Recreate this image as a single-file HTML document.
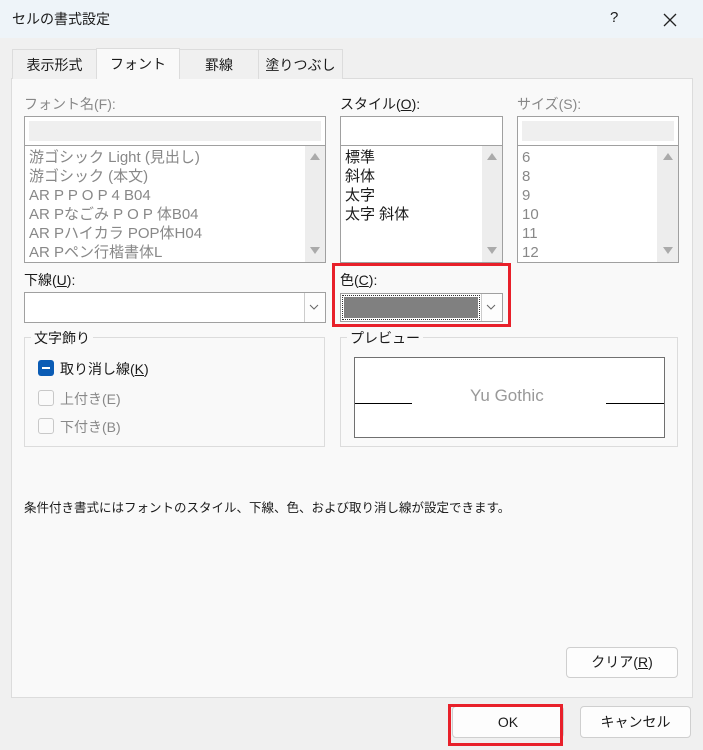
<!DOCTYPE html>
<html><head><meta charset="utf-8"><style>
*{box-sizing:border-box;margin:0;padding:0}
body{width:703px;height:750px;overflow:hidden;background:#f0f0f0;font-family:"Liberation Sans","Noto Sans CJK JP",sans-serif;font-size:14px;color:#1a1a1a;position:relative}
.a{position:absolute}
.title{left:0;top:0;width:703px;height:38px;background:#eef4f9}
.tab{top:49px;height:30px;border:1px solid #dcdcdc;border-bottom:none;background:#f0f0f0;text-align:center;line-height:30px;font-size:14px}
.panel{left:11px;top:78px;width:682px;height:620px;background:#f9f9f9;border:1px solid #dcdcdc}
.box{background:#fff;border:1px solid #a0a0a0}
.lbl{font-size:14px}
.g{color:#888}
.list div{height:19px;line-height:19px;padding-left:4px;font-size:15px}
.sb{background:#ededed}
.tri{width:0;height:0;border-left:5px solid transparent;border-right:5px solid transparent}
.btn{background:#fdfdfd;border:1px solid #cfcfcf;border-radius:4px;text-align:center;font-size:14px}
.grp{border:1px solid #dcdcdc}
</style></head><body>
<div class="a title"></div>
<div class="a" style="left:12px;top:9px;font-size:14px">セルの書式設定</div>
<div class="a" style="left:610px;top:9px;font-size:15px">?</div>
<svg class="a" style="left:662px;top:12px" width="16" height="16"><path d="M2 2L14 14M14 2L2 14" stroke="#222" stroke-width="1.3"/></svg>

<div class="a panel"></div>
<div class="a tab" style="left:12px;width:85px">表示形式</div>
<div class="a tab" style="left:96px;width:84px;background:#f9f9f9;height:31px;top:48px">フォント</div>
<div class="a tab" style="left:179px;width:80px">罫線</div>
<div class="a tab" style="left:258px;width:85px">塗りつぶし</div>

<div class="a lbl g" style="left:24px;top:94px">フォント名(F):</div>
<div class="a box" style="left:24px;top:116px;width:302px;height:30px"><div style="margin:4px;height:20px;background:#efefef"></div></div>
<div class="a box list g" style="left:24px;top:145px;width:302px;height:118px;padding-top:2px">
<div>游ゴシック Light (見出し)</div><div>游ゴシック (本文)</div><div>AR P P O P 4 B04</div><div>AR Pなごみ P O P 体B04</div><div>AR Pハイカラ POP体H04</div><div>AR Pペン行楷書体L</div></div>
<div class="a sb" style="left:305px;top:146px;width:20px;height:116px"></div>
<div class="a tri" style="left:310px;top:153px;border-bottom:7px solid #aaa"></div>
<div class="a tri" style="left:310px;top:247px;border-top:7px solid #aaa"></div>

<div class="a lbl" style="left:340px;top:94px">スタイル(<u>O</u>):</div>
<div class="a box" style="left:340px;top:116px;width:163px;height:30px"></div>
<div class="a box list" style="left:340px;top:145px;width:163px;height:118px;padding-top:2px"><div>標準</div><div>斜体</div><div>太字</div><div>太字 斜体</div></div>
<div class="a sb" style="left:482px;top:146px;width:20px;height:116px"></div>
<div class="a tri" style="left:487px;top:153px;border-bottom:7px solid #aaa"></div>
<div class="a tri" style="left:487px;top:247px;border-top:7px solid #aaa"></div>

<div class="a lbl g" style="left:517px;top:94px">サイズ(S):</div>
<div class="a box" style="left:517px;top:116px;width:162px;height:30px"><div style="margin:4px;height:20px;background:#efefef"></div></div>
<div class="a box list g" style="left:517px;top:145px;width:162px;height:118px;padding-top:2px"><div>6</div><div>8</div><div>9</div><div>10</div><div>11</div><div>12</div></div>
<div class="a sb" style="left:657px;top:146px;width:21px;height:116px"></div>
<div class="a tri" style="left:663px;top:153px;border-bottom:7px solid #aaa"></div>
<div class="a tri" style="left:663px;top:247px;border-top:7px solid #aaa"></div>

<div class="a lbl" style="left:24px;top:270px">下線(<u>U</u>):</div>
<div class="a box" style="left:24px;top:292px;width:302px;height:31px"></div>
<div class="a" style="left:304px;top:293px;width:21px;height:29px;border-left:1px solid #ccc;background:#fdfdfd"></div>
<svg class="a" style="left:309px;top:303px" width="10" height="8"><path d="M1 2L5 6L9 2" stroke="#666" fill="none"/></svg>

<div class="a" style="left:332px;top:263px;width:179px;height:64px;border:3px solid #e8202a"></div>
<div class="a lbl" style="left:340px;top:270px">色(<u>C</u>):</div>
<div class="a box" style="left:340px;top:293px;width:163px;height:29px"></div>
<div class="a" style="left:342px;top:295px;width:138px;height:25px;border:1px dotted #333;background:#fff"><div style="margin:1px;height:21px;background:#808080"></div></div>
<div class="a" style="left:481px;top:294px;width:21px;height:27px;border-left:1px solid #ccc;background:#fdfdfd"></div>
<svg class="a" style="left:486px;top:303px" width="10" height="8"><path d="M1 2L5 6L9 2" stroke="#666" fill="none"/></svg>

<div class="a grp" style="left:24px;top:337px;width:301px;height:110px"></div>
<div class="a" style="left:31px;top:328px;padding:0 3px;background:#f9f9f9">文字飾り</div>
<div class="a" style="left:38px;top:360px;width:16px;height:16px;background:#0b5cb5;border-radius:3px"><div style="margin:7px 4px;height:2px;background:#fff"></div></div>
<div class="a" style="left:60px;top:359px">取り消し線(<u>K</u>)</div>
<div class="a" style="left:38px;top:390px;width:16px;height:16px;border:1px solid #c8c8c8;border-radius:3px;background:#fafafa"></div>
<div class="a g" style="left:60px;top:389px">上付き(E)</div>
<div class="a" style="left:38px;top:418px;width:16px;height:16px;border:1px solid #c8c8c8;border-radius:3px;background:#fafafa"></div>
<div class="a g" style="left:60px;top:417px">下付き(B)</div>

<div class="a grp" style="left:340px;top:337px;width:338px;height:110px"></div>
<div class="a" style="left:347px;top:328px;padding:0 3px;background:#f9f9f9">プレビュー</div>
<div class="a" style="left:354px;top:357px;width:311px;height:81px;background:#fff;border:1px solid #707070"></div>
<div class="a" style="left:355px;top:403px;width:57px;height:1px;background:#000"></div>
<div class="a" style="left:606px;top:403px;width:58px;height:1px;background:#000"></div>
<div class="a" style="left:470px;top:386px;font-size:17px;color:#999">Yu Gothic</div>

<div class="a" style="left:24px;top:497px;font-size:12.5px">条件付き書式にはフォントのスタイル、下線、色、および取り消し線が設定できます。</div>

<div class="a btn" style="left:566px;top:647px;width:112px;height:31px;line-height:29px">クリア(<u>R</u>)</div>
<div class="a btn" style="left:452px;top:706px;width:112px;height:32px;line-height:30px">OK</div>
<div class="a" style="left:448px;top:704px;width:115px;height:42px;border:3px solid #e8202a"></div>
<div class="a btn" style="left:580px;top:706px;width:111px;height:32px;line-height:30px">キャンセル</div>
</body></html>
